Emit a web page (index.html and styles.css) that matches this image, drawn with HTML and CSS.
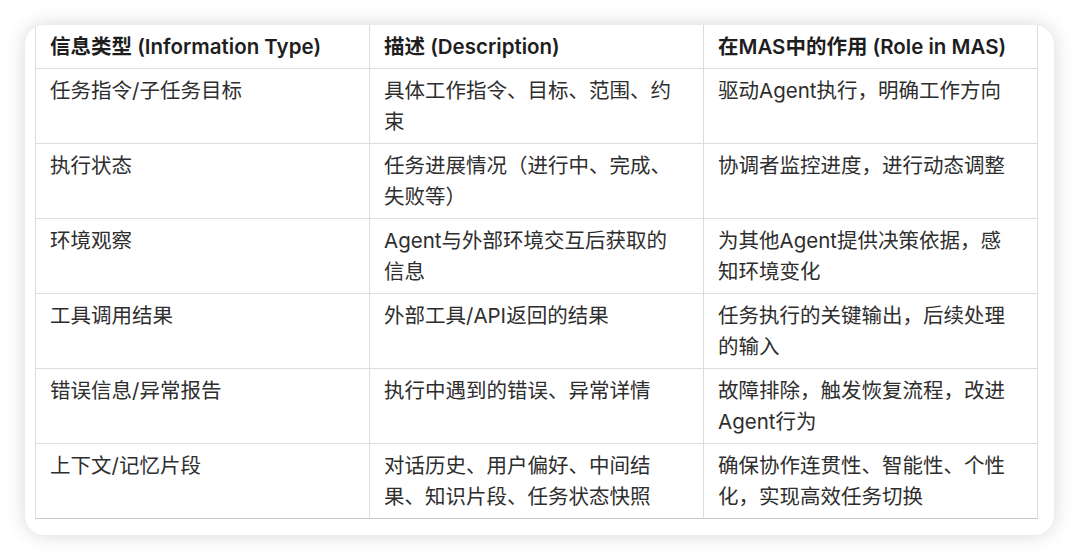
FILE: index.html
```html
<!DOCTYPE html>
<html lang="zh-CN">
<head>
<meta charset="utf-8">
<title>MAS 信息类型</title>
<link rel="stylesheet" href="styles.css">
</head>
<body>
<div class="card">
  <table class="info-table">
    <thead>
      <tr>
        <th>信息类型 (Information Type)</th>
        <th>描述 (Description)</th>
        <th>在MAS中的作用 (Role in MAS)</th>
      </tr>
    </thead>
    <tbody>
      <tr>
        <td>任务指令/子任务目标</td>
        <td>具体工作指令、目标、范围、约束</td>
        <td>驱动Agent执行，明确工作方向</td>
      </tr>
      <tr>
        <td>执行状态</td>
        <td>任务进展情况（进行中、完成、失败等）</td>
        <td>协调者监控进度，进行动态调整</td>
      </tr>
      <tr>
        <td>环境观察</td>
        <td>Agent与外部环境交互后获取的信息</td>
        <td>为其他Agent提供决策依据，感知环境变化</td>
      </tr>
      <tr>
        <td>工具调用结果</td>
        <td>外部工具/API返回的结果</td>
        <td>任务执行的关键输出，后续处理的输入</td>
      </tr>
      <tr>
        <td>错误信息/异常报告</td>
        <td>执行中遇到的错误、异常详情</td>
        <td>故障排除，触发恢复流程，改进Agent行为</td>
      </tr>
      <tr>
        <td>上下文/记忆片段</td>
        <td>对话历史、用户偏好、中间结果、知识片段、任务状态快照</td>
        <td>确保协作连贯性、智能性、个性化，实现高效任务切换</td>
      </tr>
    </tbody>
  </table>
</div>
</body>
</html>
```
FILE: styles.css
```css
html, body {
  margin: 0;
  padding: 0;
  background: #ffffff;
}

body {
  width: 1080px;
  height: 560px;
  overflow: hidden;
  font-family: "Inter", "Noto Sans CJK SC", sans-serif;
}

.card {
  box-sizing: border-box;
  margin: 25px 0 0 25px;
  width: 1029px;
  height: 510px;
  padding: 0 16px 16px 10px;
  background: #ffffff;
  border-radius: 20px;
  box-shadow: 0 0 20px rgba(0, 0, 0, 0.16);
  overflow: hidden;
}

.info-table {
  width: 1003px;
  border-collapse: collapse;
  table-layout: fixed;
  font-size: 20.5px;
  line-height: 31px;
  color: #2e2e2e;
}

.info-table th,
.info-table td {
  border: 1px solid #dddddd;
  padding: 6px 24px 6px 14px;
  text-align: left;
  vertical-align: top;
}

.info-table th {
  border-top: none;
  font-weight: 600;
  color: #1e1e1e;
}

.info-table tbody tr:last-child td {
  border-bottom-color: #c9c9c9;
}
```
